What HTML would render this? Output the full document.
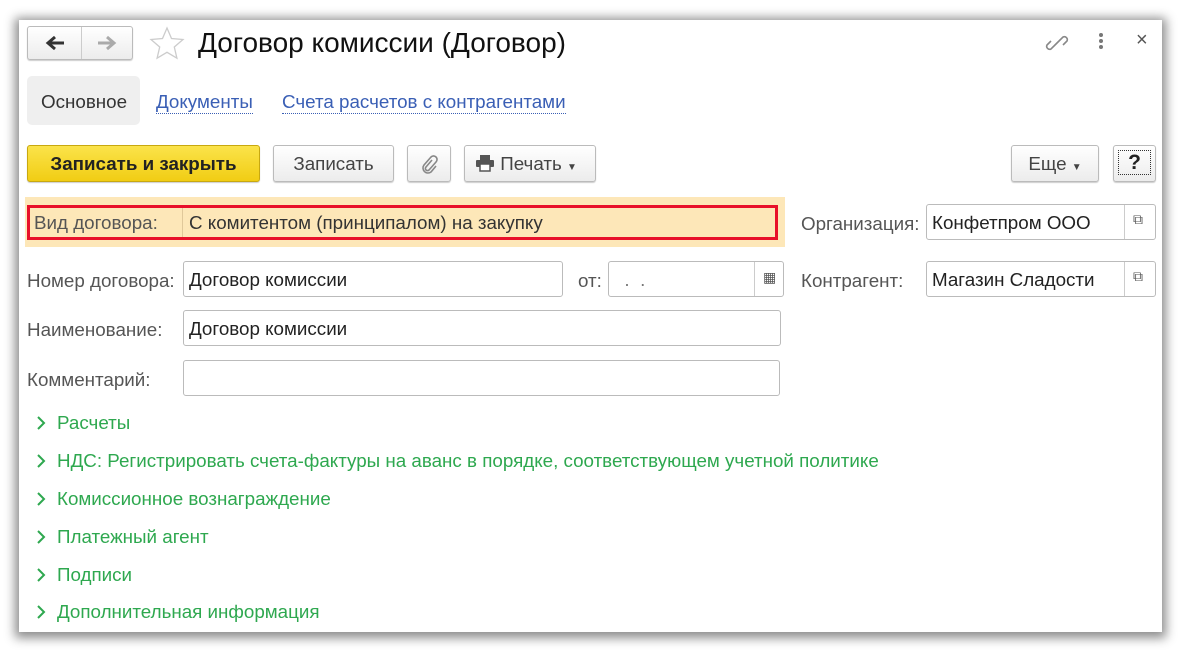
<!DOCTYPE html>
<html><head><meta charset="utf-8"><style>
body{margin:0;width:1181px;height:653px;background:#fff;position:relative;overflow:hidden;font-family:"Liberation Sans",sans-serif;color:#333}
.win{position:absolute;left:19px;top:20px;width:1143px;height:612px;background:#fff;box-shadow:0 2px 10px 4px rgba(0,0,0,.45)}
.a{position:absolute;white-space:nowrap}
.btn{position:absolute;border:1px solid #bbb;border-radius:3px;background:linear-gradient(#fff,#ececec);box-shadow:0 1px 1px rgba(0,0,0,.2);font-size:18.8px;color:#444;text-align:center;box-sizing:border-box}
.inp{position:absolute;border:1px solid #bbb;border-radius:3px;background:#fff;box-sizing:border-box;font-size:18.8px;color:#222;padding-left:5px;line-height:35px}
.lbl{position:absolute;font-size:18.8px;color:#555;white-space:nowrap}
.grp{position:absolute;left:34px;font-size:18.8px;color:#2ea84f;white-space:nowrap}
.grp svg{position:absolute;left:2px;top:3px}
.grp span{margin-left:23px}
</style></head><body>
<div class="win"></div>
<div class="btn" style="left:27px;top:26px;width:106px;height:34px;"></div>
<div class="a" style="left:81px;top:27px;width:1px;height:32px;background:#ccc"></div>
<svg class="a" style="left:44px;top:34px" width="22" height="18" viewBox="0 0 22 18"><path d="M20 9H6M11 3L4 9l7 6" fill="none" stroke="#333" stroke-width="3"/></svg>
<svg class="a" style="left:96px;top:34px" width="22" height="18" viewBox="0 0 22 18"><path d="M2 9h14M11 3l7 6-7 6" fill="none" stroke="#aaa" stroke-width="3"/></svg>
<svg class="a" style="left:149px;top:26px" width="36" height="34" viewBox="0 0 36 34"><path d="M18 2l4.5 10.5 11.5 1-8.7 7.5 2.6 11.2L18 26.3l-9.9 5.9 2.6-11.2L2 13.5l11.5-1z" fill="none" stroke="#ccc" stroke-width="1.3"/></svg>
<div class="a" style="left:198px;top:27px;font-size:28px;color:#111">Договор комиссии (Договор)</div>
<svg class="a" style="left:1044px;top:30px" width="26" height="26" viewBox="0 0 26 26" fill="none" stroke="#888" stroke-width="1.6"><path d="M11 15l-4 4a3 3 0 01-4-4l4-4M15 11l4-4a3 3 0 014 4l-4 4M10 16l6-6"/></svg>
<div class="a" style="left:1099px;top:33px;width:4px;height:4px;border-radius:2px;background:#777;box-shadow:0 6px #777,0 12px #777"></div>
<div class="a" style="left:1136px;top:29px;font-size:20px;color:#555">×</div>
<div class="a" style="left:27px;top:76px;width:113px;height:49px;background:#efefef;border-radius:5px"></div>
<div class="a" style="left:41px;top:91px;font-size:18.8px;color:#333">Основное</div>
<div class="a" style="left:156px;top:91px;font-size:18.8px;color:#3a5fb5;border-bottom:1px dotted #3a5fb5">Документы</div>
<div class="a" style="left:282px;top:91px;font-size:18.8px;color:#3a5fb5;border-bottom:1px dotted #3a5fb5">Счета расчетов с контрагентами</div>
<div class="btn" style="left:27px;top:145px;width:233px;height:37px;background:linear-gradient(#fbe34a,#f1cd14);border-color:#c8a810;color:#222;font-weight:bold;line-height:36px">Записать и закрыть</div>
<div class="btn" style="left:273px;top:145px;width:121px;height:37px;line-height:36px">Записать</div>
<div class="btn" style="left:407px;top:145px;width:44px;height:37px;"><svg style="margin-top:8px" width="18" height="20" viewBox="0 0 18 20"><path d="M12 6l-6 7a2 2 0 003 3l7-8a3.5 3.5 0 00-5-5l-7 8a5 5 0 007 7l5-6" fill="none" stroke="#888" stroke-width="1.6"/></svg></div>
<div class="btn" style="left:464px;top:145px;width:132px;height:37px;line-height:36px;text-align:left;padding-left:10px"><svg width="20" height="18" viewBox="0 0 20 18" style="vertical-align:-2px"><rect x="5" y="1" width="10" height="5" fill="#555"/><rect x="1" y="6" width="18" height="7" rx="1" fill="#555"/><rect x="5" y="10" width="10" height="7" fill="#fff" stroke="#555" stroke-width="1.5"/></svg> Печать <span style="font-size:10px">▼</span></div>
<div class="btn" style="left:1011px;top:145px;width:88px;height:37px;line-height:36px">Еще <span style="font-size:10px">▼</span></div>
<div class="btn" style="left:1113px;top:145px;width:43px;height:37px;line-height:33px;font-size:21px;color:#222;font-weight:bold"><span style="border:1px dotted #333;padding:0 9px">?</span></div>
<div class="a" style="left:25px;top:197px;width:760px;height:50px;background:#fde7b8"></div>
<div class="a" style="left:27px;top:205px;width:751px;height:35px;border:3px solid #e8102a;box-sizing:border-box"></div>
<div class="a" style="left:182px;top:208px;width:1px;height:29px;background:#e0c89a"></div>
<div class="lbl" style="left:34px;top:212px">Вид договора:</div>
<div class="lbl" style="left:189px;top:212px;color:#333">С комитентом (принципалом) на закупку</div>
<div class="lbl" style="left:801px;top:213px">Организация:</div>
<div class="inp" style="left:926px;top:204px;width:230px;height:36px">Конфетпром ООО</div>
<div class="a" style="left:1124px;top:205px;width:1px;height:34px;background:#ccc"></div>
<div class="a" style="left:1133px;top:211px;font-size:14px;color:#555">⧉</div>
<div class="lbl" style="left:27px;top:270px">Номер договора:</div>
<div class="inp" style="left:183px;top:261px;width:380px;height:36px">Договор комиссии</div>
<div class="lbl" style="left:578px;top:270px">от:</div>
<div class="inp" style="left:608px;top:261px;width:176px;height:36px;color:#777">&nbsp;&nbsp;.&nbsp;&nbsp;.</div>
<div class="a" style="left:754px;top:262px;width:1px;height:34px;background:#ccc"></div>
<div class="a" style="left:763px;top:269px;font-size:14px;color:#555">▦</div>
<div class="lbl" style="left:801px;top:270px">Контрагент:</div>
<div class="inp" style="left:926px;top:261px;width:230px;height:36px">Магазин Сладости</div>
<div class="a" style="left:1124px;top:262px;width:1px;height:34px;background:#ccc"></div>
<div class="a" style="left:1133px;top:268px;font-size:14px;color:#555">⧉</div>
<div class="lbl" style="left:27px;top:319px">Наименование:</div>
<div class="inp" style="left:183px;top:310px;width:598px;height:36px">Договор комиссии</div>
<div class="lbl" style="left:27px;top:369px">Комментарий:</div>
<div class="inp" style="left:183px;top:360px;width:597px;height:36px"></div>
<div class="grp" style="top:412px"><svg width="10" height="16" viewBox="0 0 10 16"><path d="M2 2l6 6-6 6" fill="none" stroke="#2ea84f" stroke-width="2"/></svg><span>Расчеты</span></div>
<div class="grp" style="top:450px"><svg width="10" height="16" viewBox="0 0 10 16"><path d="M2 2l6 6-6 6" fill="none" stroke="#2ea84f" stroke-width="2"/></svg><span>НДС: Регистрировать счета-фактуры на аванс в порядке, соответствующем учетной политике</span></div>
<div class="grp" style="top:488px"><svg width="10" height="16" viewBox="0 0 10 16"><path d="M2 2l6 6-6 6" fill="none" stroke="#2ea84f" stroke-width="2"/></svg><span>Комиссионное вознаграждение</span></div>
<div class="grp" style="top:526px"><svg width="10" height="16" viewBox="0 0 10 16"><path d="M2 2l6 6-6 6" fill="none" stroke="#2ea84f" stroke-width="2"/></svg><span>Платежный агент</span></div>
<div class="grp" style="top:564px"><svg width="10" height="16" viewBox="0 0 10 16"><path d="M2 2l6 6-6 6" fill="none" stroke="#2ea84f" stroke-width="2"/></svg><span>Подписи</span></div>
<div class="grp" style="top:601px"><svg width="10" height="16" viewBox="0 0 10 16"><path d="M2 2l6 6-6 6" fill="none" stroke="#2ea84f" stroke-width="2"/></svg><span>Дополнительная информация</span></div>
</body></html>
